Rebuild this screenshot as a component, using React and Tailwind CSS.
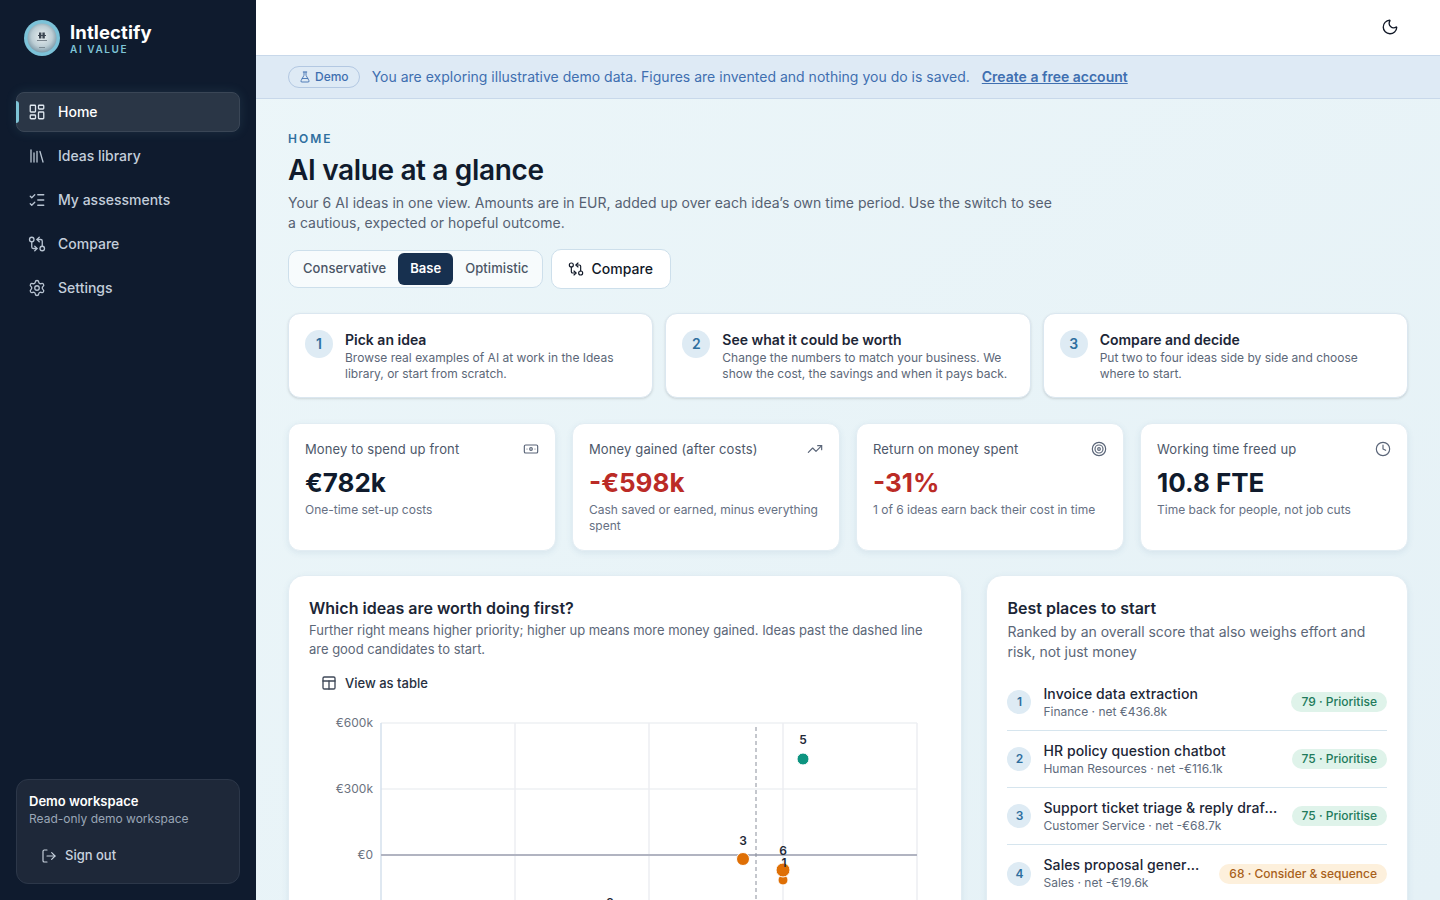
import React from "react";
import { LayoutDashboard, Library, ListChecks, GitCompareArrows, Settings, LogOut, Moon, FlaskConical, Banknote, TrendingUp, Target, Clock } from "lucide-react";

const nav = [
  [LayoutDashboard, "Home", true],
  [Library, "Ideas library"],
  [ListChecks, "My assessments"],
  [GitCompareArrows, "Compare"],
  [Settings, "Settings"],
];

const steps = [
  ["1", "Pick an idea", "Browse real examples of AI at work in the Ideas library, or start from scratch."],
  ["2", "See what it could be worth", "Change the numbers to match your business. We show the cost, the savings and when it pays back."],
  ["3", "Compare and decide", "Put two to four ideas side by side and choose where to start."],
];

const stats = [
  ["Money to spend up front", Banknote, "€782k", "One-time set-up costs", false],
  ["Money gained (after costs)", TrendingUp, "-€598k", "Cash saved or earned, minus everything spent", true],
  ["Return on money spent", Target, "-31%", "1 of 6 ideas earn back their cost in time", true],
  ["Working time freed up", Clock, "10.8 FTE", "Time back for people, not job cuts", false],
];

const ranked = [
  ["1", "Invoice data extraction", "Finance · net €436.8k", "79 · Prioritise", true],
  ["2", "HR policy question chatbot", "Human Resources · net -€116.1k", "75 · Prioritise", true],
  ["3", "Support ticket triage & reply drafting", "Customer Service · net -€68.7k", "75 · Prioritise", true],
  ["4", "Sales proposal generator", "Sales · net -€19.6k", "68 · Consider & sequence", false],
];

function Logo() {
  return (
    <svg width="36" height="36" viewBox="0 0 36 36" className="shrink-0">
      <defs>
        <radialGradient id="sph" cx="50%" cy="45%" r="55%">
          <stop offset="0%" stopColor="#e8eef0" />
          <stop offset="65%" stopColor="#bccdd4" />
          <stop offset="100%" stopColor="#7f9aa8" />
        </radialGradient>
      </defs>
      <circle cx="18" cy="18" r="18" fill="#7cc2d8" />
      <circle cx="18" cy="18" r="14.5" fill="url(#sph)" />
      <g fill="#3b4652">
        <rect x="15" y="12.5" width="2.4" height="6" />
        <rect x="18.4" y="12.5" width="2.4" height="6" />
        <rect x="14" y="15" width="8" height="1" />
        <rect x="13" y="20" width="10" height="1" opacity="0.6" />
      </g>
      <rect x="15" y="27" width="6" height="1" fill="#55636e" opacity="0.6" />
    </svg>
  );
}

function TableIcon() {
  return (
    <svg width="16" height="16" viewBox="0 0 24 24" fill="none" stroke="#3f4858" strokeWidth="2" strokeLinecap="round" strokeLinejoin="round" className="shrink-0">
      <rect x="3" y="3" width="18" height="18" rx="2" />
      <path d="M3 9h18" />
      <path d="M12 9v12" />
    </svg>
  );
}

function Sidebar() {
  return (
    <aside className="w-64 h-full shrink-0 bg-[#0f1b2e] flex flex-col px-4 pt-5 pb-4">
      <div className="flex items-center gap-2.5 px-2 h-[36px]">
        <Logo />
        <div className="flex flex-col">
          <span className="text-[18.5px] leading-[22px] font-bold text-white tracking-[0.1px]">Intlectify</span>
          <span className="text-[10px] leading-[12px] font-semibold tracking-[1.6px] text-[#7fc4d6]">AI VALUE</span>
        </div>
      </div>
      <nav className="mt-[36px] flex flex-col gap-1">
        {nav.map(([Icon, label, active]) => (
          <div
            key={label}
            className={
              active
                ? "relative h-10 flex items-center gap-3 px-[11px] rounded-lg bg-[#2a3646] border border-[#3a4656] shadow-[0_0_12px_rgba(125,196,214,0.12)] text-white text-sm font-medium"
                : "h-10 flex items-center gap-3 px-3 rounded-lg text-[#c3cedb] text-sm font-medium"
            }
          >
            {active && <span className="absolute -left-px top-2 bottom-2 w-[3px] rounded-r bg-[#7fc4d6]" />}
            <Icon size={18} strokeWidth={1.75} className={active ? "text-[#dfe7ef]" : "text-[#b8c4d2]"} />
            <span>{label}</span>
          </div>
        ))}
      </nav>
      <div className="mt-auto rounded-xl bg-[#1e2839] border border-[#2c3749] px-3 pt-[13px] pb-3 h-[105px]">
        <div className="text-[13px] leading-4 font-semibold text-white">Demo workspace</div>
        <div className="text-xs leading-4 mt-0.5 text-[#9aa6b6]">Read-only demo workspace</div>
        <div className="mt-[13px] ml-3 flex items-center gap-2 h-8 text-[13px] font-medium text-[#c9d3df]">
          <LogOut size={16} strokeWidth={1.75} />
          <span>Sign out</span>
        </div>
      </div>
    </aside>
  );
}

function Chart() {
  return (
    <svg width="632" height="220" viewBox="0 0 632 220" className="block mt-[5px]" style={{ fontFamily: "Inter, sans-serif" }}>
      {[25, 91].map((y) => <line key={y} x1="72" x2="608" y1={y} y2={y} stroke="#eef0f3" strokeWidth="1.5" />)}
      {[206, 340, 474, 608].map((x) => <line key={x} x1={x} x2={x} y1="25" y2="220" stroke="#eceef2" strokeWidth="1.5" />)}
      <line x1="72" x2="72" y1="25" y2="220" stroke="#d5e0ec" strokeWidth="1.5" />
      <line x1="72" x2="608" y1="157" y2="157" stroke="#b1b4c1" strokeWidth="2" />
      <line x1="447" x2="447" y1="29" y2="220" stroke="#8a8f9b" strokeWidth="1" strokeDasharray="4 3" />
      <g fontSize="12" fill="#6b7280" textAnchor="end">
        <text x="64" y="29">€600k</text>
        <text x="64" y="95">€300k</text>
        <text x="64" y="161">€0</text>
      </g>
      <circle cx="494" cy="61" r="6" fill="#0d9480" stroke="#ffffff" strokeWidth="1" />
      <circle cx="434" cy="161" r="6.5" fill="#df6f05" stroke="#ffffff" strokeWidth="1" />
      <circle cx="474" cy="182" r="5" fill="#df6f05" stroke="#ffffff" strokeWidth="1" />
      <circle cx="474" cy="172" r="7" fill="#df6f05" stroke="#ffffff" strokeWidth="1" />
      <g fontSize="12" fontWeight="600" fill="#1f2937" textAnchor="middle">
        <text x="494" y="46">5</text>
        <text x="434" y="147">3</text>
        <text x="474" y="157">6</text>
        <text x="475" y="169">1</text>
        <text x="301" y="209">2</text>
      </g>
    </svg>
  );
}

export default function App() {
  return (
    <div className="h-screen w-full overflow-hidden flex" style={{ fontFamily: "Inter, 'Noto Sans', sans-serif" }}>
      <Sidebar />
      <main className="flex-1 min-w-0 h-full flex flex-col bg-gradient-to-br from-[#ecf6f9] to-[#e5f1f6] overflow-hidden">
        <header className="h-[55px] shrink-0 bg-white flex items-center justify-end pr-[41px] pb-[2px]">
          <Moon size={18} strokeWidth={1.75} className="text-[#111827]" />
        </header>
        <div className="h-[44px] shrink-0 px-8 flex items-center gap-3 bg-[#deeaf5] border-y border-[#c8d8ea] text-[14px] text-[#3f6fb0]">
          <span className="h-[22px] flex items-center gap-1 px-[10px] rounded-full border border-[#b3c8e2] text-xs font-medium">
            <FlaskConical size={12} strokeWidth={1.75} /> Demo
          </span>
          <span className="pb-[2px] tracking-[0.01px]">You are exploring illustrative demo data. Figures are invented and nothing you do is saved.</span>
          <span className="pb-[2px] font-semibold underline">Create a free account</span>
        </div>
        <div className="flex-1 min-h-0 px-8 pt-[32px]">
          <div className="text-xs leading-4 font-semibold tracking-[2px] text-[#2f6f9f]">HOME</div>
          <h1 className="mt-[5px] text-[28px] leading-[36px] font-semibold tracking-[-0.35px] text-[#101b2d]">AI value at a glance</h1>
          <p className="mt-[5px] w-[768px] text-sm leading-[20px] tracking-[0.04px] text-[#566172]">
            Your 6 AI ideas in one view. Amounts are in EUR, added up over each idea’s own time period. Use the switch to see a cautious, expected or hopeful outcome.
          </p>
          <div className="mt-[16px] flex items-center gap-2">
            <div className="h-[38px] flex items-center p-[3px] rounded-[10px] border border-[#cddfeb] bg-white/60 text-[13px] tracking-[0.06px] font-medium text-[#4a5565]">
              <span className="pl-[11px] pr-3 h-[32px] flex items-center">Conservative</span>
              <span className="px-3 h-[32px] flex items-center rounded-md bg-[#17304f] text-white font-semibold">Base</span>
              <span className="pl-3 pr-[10px] h-[32px] flex items-center">Optimistic</span>
            </div>
            <div className="h-[40px] flex items-center gap-2 pl-4 pr-[17px] rounded-[10px] border border-[#cddfeb] bg-white text-sm font-medium text-[#111827]">
              <GitCompareArrows size={16} strokeWidth={1.75} />
              Compare
            </div>
          </div>

          <div className="mt-[24px] grid grid-cols-3 gap-3">
            {steps.map(([n, t, d]) => (
              <div key={n} className="h-[85px] flex gap-3 px-4 pt-[18px] rounded-xl bg-white border border-[#dbe7f0] shadow-sm">
                <span className="w-7 h-7 rounded-full bg-[#deebf4] text-[#2f6f9f] text-sm font-semibold flex items-center justify-center shrink-0 -mt-[2px]">{n}</span>
                <div className="min-w-0">
                  <div className="text-sm leading-4 font-semibold text-[#1c2636]">{t}</div>
                  <div className="mt-[2px] text-xs leading-4 text-[#5c6778]">{d}</div>
                </div>
              </div>
            ))}
          </div>

          <div className="mt-[25px] grid grid-cols-4 gap-4">
            {stats.map(([label, Icon, val, sub, neg]) => (
              <div key={label} className="h-[128px] rounded-xl bg-white border border-[#e2edf3] shadow-[0_2px_6px_rgba(60,110,150,0.1)] px-4 pt-[15px]">
                <div className="flex items-center justify-between">
                  <span className="text-[13px] leading-5 tracking-[0.13px] text-[#4d586a]">{label}</span>
                  <Icon size={16} strokeWidth={1.75} className="text-[#5a6578]" />
                </div>
                <div className={"mt-[8px] text-[26px] leading-8 font-bold " + (neg ? "text-[#bb2b26]" : "text-[#101b2d]")}>{val}</div>
                <div className="mt-[3px] text-xs leading-4 text-[#667083]">{sub}</div>
              </div>
            ))}
          </div>

          <div className="mt-6 grid grid-cols-[8fr_5fr] gap-6">
            <section className="h-[400px] min-w-0 rounded-2xl bg-white border border-[#e2edf3] shadow-[0_2px_6px_rgba(60,110,150,0.1)] px-5 pt-[22px]">
              <h2 className="text-base leading-5 font-semibold text-[#1c2636]">Which ideas are worth doing first?</h2>
              <p className="mt-[3px] text-[13px] leading-[19px] tracking-[-0.02px] text-[#5c6778]">
                Further right means higher priority; higher up means more money gained. Ideas past the dashed line are good candidates to start.
              </p>
              <div className="mt-[14px] ml-3 flex items-center gap-2 text-[13px] leading-5 font-medium text-[#27303f]">
                <TableIcon />
                View as table
              </div>
              <Chart />
            </section>
            <section className="h-[400px] min-w-0 rounded-2xl bg-white border border-[#e2edf3] shadow-[0_2px_6px_rgba(60,110,150,0.1)] px-5 pt-[22px]">
              <h2 className="text-base leading-5 font-semibold text-[#1c2636]">Best places to start</h2>
              <p className="mt-[4px] text-sm leading-5 text-[#5c6778]">
                Ranked by an overall score that also weighs effort and risk, not just money
              </p>
              <div className="mt-[12px] flex flex-col">
                {ranked.map(([n, t, s, b, ok], i) => (
                  <div key={n} className={"h-[57px] flex items-center gap-3 " + (i < 3 ? "border-b border-[#d6e5ee]" : "")}>
                    <span className="w-6 h-6 rounded-full bg-[#deebf4] text-[#2f6f9f] text-xs font-semibold flex items-center justify-center shrink-0">{n}</span>
                    <div className="flex-1 min-w-0 pr-px">
                      <div className="truncate text-sm leading-[18px] tracking-[0.1px] font-medium text-[#1c2636]">{t}</div>
                      <div className="truncate text-xs leading-4 mt-px text-[#606b7c]">{s}</div>
                    </div>
                    <span className={"shrink-0 h-5 flex items-center px-2.5 rounded-full text-xs font-medium " + (ok ? "bg-[#dff3ea] text-[#217a5b]" : "bg-[#fdf0dc] text-[#a8601a]")}>{b}</span>
                  </div>
                ))}
              </div>
            </section>
          </div>
        </div>
      </main>
    </div>
  );
}
